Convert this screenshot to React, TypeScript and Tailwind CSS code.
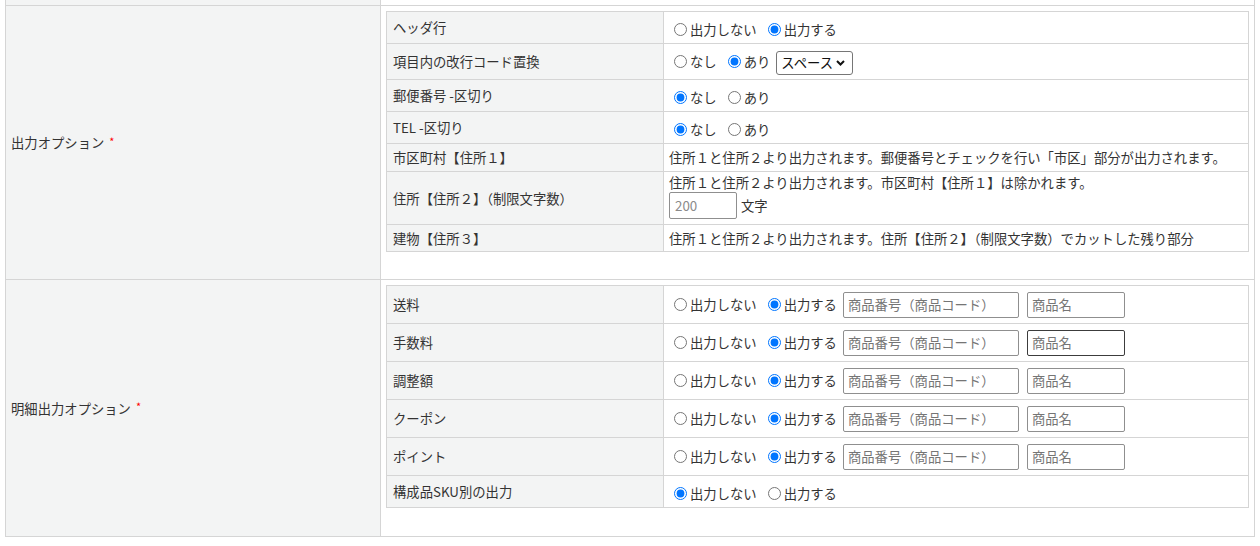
import React from 'react';

type Opt = { label: string; checked?: boolean };

const Radio: React.FC<{ name: string; opt: Opt }> = ({ name, opt }) => (
  <label className="inline-flex items-center">
    <input
      type="radio"
      name={name}
      defaultChecked={opt.checked}
      className="m-0 ml-[5px] mr-[3px] h-[13px] w-[13px]"
    />
    <span>{opt.label}</span>
  </label>
);

const RadioGroup: React.FC<{ name: string; opts: Opt[] }> = ({ name, opts }) => (
  <div className="flex items-center gap-[6px]">
    {opts.map((o) => (
      <Radio key={o.label} name={name} opt={o} />
    ))}
  </div>
);

const Row: React.FC<{ label: string; h: string; children: React.ReactNode; valueClass?: string }> = ({
  label,
  h,
  children,
  valueClass = '',
}) => (
  <div className={`grid grid-cols-[277px_1fr] border-b border-[#d5d5d5] ${h}`}>
    <div className="flex items-center border-r border-[#d5d5d5] bg-[#f3f4f4] px-[6px]">{label}</div>
    <div className={`flex items-center pl-[5px] ${valueClass}`}>{children}</div>
  </div>
);

const ItemInputs: React.FC<{ dark?: boolean }> = ({ dark }) => (
  <>
    <input
      placeholder="商品番号（商品コード）"
      className="ml-[6px] h-[26px] w-[176px] rounded-[2px] border border-[#8f8f8f] bg-white px-[4px] placeholder:text-[#757575]"
    />
    <input
      placeholder="商品名"
      className={`ml-[8px] h-[26px] w-[98px] rounded-[2px] border bg-white px-[4px] placeholder:text-[#757575] ${
        dark ? 'border-[#3c3c3c]' : 'border-[#8f8f8f]'
      }`}
    />
  </>
);

const OutputOptions: React.FC = () => (
  <div className="border-x border-t border-[#d5d5d5]">
    <Row label="ヘッダ行" h="h-[32px]" valueClass="pt-[3px]">
      <RadioGroup name="header" opts={[{ label: '出力しない' }, { label: '出力する', checked: true }]} />
    </Row>
    <Row label="項目内の改行コード置換" h="h-[36px]">
      <RadioGroup name="newline" opts={[{ label: 'なし' }, { label: 'あり', checked: true }]} />
      <div className="relative ml-[6px] mt-[2px]">
        <select className="h-[24px] w-[77px] appearance-none rounded-[3px] border border-[#767676] bg-white pl-[4px] text-[#111]">
          <option>スペース</option>
        </select>
        <svg
          className="pointer-events-none absolute right-[8px] top-1/2 -translate-y-1/2"
          width="9"
          height="6"
          viewBox="0 0 9 6"
          fill="none"
        >
          <path d="M1 1l3.5 3.5L8 1" stroke="#111" strokeWidth="2" />
        </svg>
      </div>
    </Row>
    <Row label="郵便番号 -区切り" h="h-[32px]" valueClass="pt-[3px]">
      <RadioGroup name="zip" opts={[{ label: 'なし', checked: true }, { label: 'あり' }]} />
    </Row>
    <Row label="TEL -区切り" h="h-[32px]" valueClass="pt-[3px]">
      <RadioGroup name="tel" opts={[{ label: 'なし', checked: true }, { label: 'あり' }]} />
    </Row>
    <Row label="市区町村【住所１】" h="h-[28px]">
      住所１と住所２より出力されます。郵便番号とチェックを行い「市区」部分が出力されます。
    </Row>
    <Row label="住所【住所２】（制限文字数）" h="h-[53px]" valueClass="!flex-col !items-start !justify-start pt-[2px]">
      <div className="leading-[18px]">住所１と住所２より出力されます。市区町村【住所１】は除かれます。</div>
      <div className="flex items-center">
        <input
          placeholder="200"
          className="h-[27px] w-[68px] rounded-[2px] border border-[#8f8f8f] bg-white px-[5px] placeholder:text-[#8a8a8a]"
        />
        <span className="ml-[4px]">文字</span>
      </div>
    </Row>
    <Row label="建物【住所３】" h="h-[27px]">
      住所１と住所２より出力されます。住所【住所２】（制限文字数）でカットした残り部分
    </Row>
  </div>
);

const DetailOptions: React.FC = () => {
  const rows = ['送料', '手数料', '調整額', 'クーポン', 'ポイント'];
  return (
    <div className="border-x border-t border-[#d5d5d5]">
      {rows.map((r, i) => (
        <Row key={r} label={r} h="h-[38px]">
          <RadioGroup name={`d${i}`} opts={[{ label: '出力しない' }, { label: '出力する', checked: true }]} />
          <ItemInputs dark={i === 1} />
        </Row>
      ))}
      <Row label="構成品SKU別の出力" h="h-[32px]" valueClass="pt-[4px]">
        <RadioGroup name="sku" opts={[{ label: '出力しない', checked: true }, { label: '出力する' }]} />
      </Row>
    </div>
  );
};

const Required: React.FC<{ label: string }> = ({ label }) => (
  <div className="flex items-center border-r border-[#d5d5d5] bg-[#f3f4f4] pl-[5px]">
    <span>{label}</span>
    <span className="ml-[5px] -mt-[3px] text-[11px] text-[#f00]">*</span>
  </div>
);

export default function App() {
  return (
    <div
      className="h-[546px] w-[1260px] overflow-hidden bg-white text-[13.33px] leading-[19px] text-[#333]"
      style={{ fontFamily: '"Noto Sans CJK JP", "Noto Sans", sans-serif' }}
    >
      <div className="ml-[5px] w-[1250px] border-x border-[#d5d5d5]">
        <div className="grid h-[5px] grid-cols-[375px_1fr]">
          <div className="border-r border-[#d5d5d5] bg-[#f3f4f4]" />
          <div />
        </div>
        <div className="grid grid-cols-[375px_1fr] border-t border-[#d5d5d5]">
          <Required label="出力オプション" />
          <div className="px-[5px] pb-[27px] pt-[5px]">
            <OutputOptions />
          </div>
        </div>
        <div className="grid grid-cols-[375px_1fr] border-y border-[#d5d5d5]">
          <Required label="明細出力オプション" />
          <div className="px-[5px] pb-[28px] pt-[5px]">
            <DetailOptions />
          </div>
        </div>
      </div>
    </div>
  );
}
